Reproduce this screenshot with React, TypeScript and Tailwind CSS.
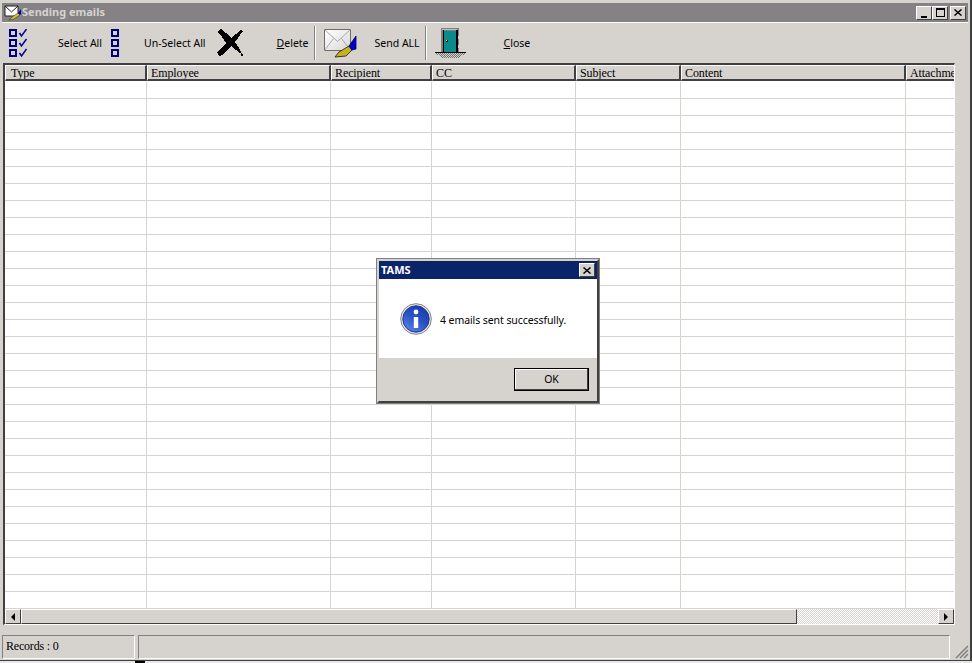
const columns = [
  { name: "Type", width: 142, pad: "pl-[5px]" },
  { name: "Employee", width: 184, pad: "pl-[3px]" },
  { name: "Recipient", width: 101, pad: "pl-[3px]" },
  { name: "CC", width: 144, pad: "pl-[3px]" },
  { name: "Subject", width: 105, pad: "pl-[3px]" },
  { name: "Content", width: 225, pad: "pl-[3px]" },
  { name: "Attachment", width: 60, pad: "pl-[3px]" },
]

const rows = Array.from({ length: 31 }, (_, i) => i)

function CheckListIcon({ checked }: { checked: boolean }) {
  return (
    <svg width="19" height="29" viewBox="0 0 19 29" shapeRendering="crispEdges">
      {[0, 10, 20].map((y) => (
        <g key={y}>
          <path d={`M0 ${y}h8v8h-8zM2 ${y + 2}v4h4v-4z`} fill="#000080" fillRule="evenodd" />
          {checked && <path d={`M10.500 ${y + 4}l2 3 5-7`} stroke="#0000a0" strokeWidth="1.500" fill="none" shapeRendering="auto" />}
        </g>
      ))}
    </svg>
  )
}

function CrossIcon() {
  return (
    <svg width="27" height="28" viewBox="0 0 27 28" shapeRendering="crispEdges">
      <path d="M0 3L4 0L9 4L14 9L24 1L26 2L18 13L22 19L25 25L23 24L14 17L6 26L2 27L0 23L9 14L5 8Z" fill="#000" />
      <rect x="24" y="25" width="2" height="2" fill="#000" />
    </svg>
  )
}

function MailIcon() {
  return (
    <svg width="34" height="29" viewBox="0 0 34 29">
      <defs>
        <linearGradient id="mailFill" x1="0" y1="0" x2="1" y2="1">
          <stop offset="0" stopColor="#ffffff" />
          <stop offset="1" stopColor="#d8d8d8" />
        </linearGradient>
      </defs>
      <path d="M0.500 0.500h26v21h-26z" fill="url(#mailFill)" stroke="#6c6c6c" />
      <path d="M0.500 0.500l13 12 13-12M0.500 21.500l9-12M26.500 21.500l-9-12" fill="none" stroke="#a8a8a8" />
      <path d="M11 28l4-5 10-6 3 4-6 6z" fill="#c8b020" stroke="#181800" strokeWidth="0.800" />
      <path d="M25 17l7-10v13l-4 1z" fill="#0000c8" stroke="#000060" strokeWidth="0.800" />
    </svg>
  )
}

function DoorIcon() {
  return (
    <svg width="32" height="31" viewBox="0 0 32 31" shapeRendering="crispEdges">
      <defs>
        <pattern id="gravel" width="2" height="2" patternUnits="userSpaceOnUse">
          <rect width="2" height="2" fill="#d6d3ce" />
          <rect width="1" height="1" fill="#707070" />
          <rect x="1" y="1" width="1" height="1" fill="#707070" />
        </pattern>
      </defs>
      <rect x="6" y="0" width="18" height="24" fill="#808080" />
      <rect x="7" y="1" width="15" height="1" fill="#c0c0c0" />
      <rect x="8" y="2" width="1" height="22" fill="#000" />
      <rect x="9" y="3" width="12" height="21" fill="#0a8a8a" />
      <rect x="21" y="2" width="2" height="22" fill="#000" />
      <rect x="23" y="8" width="1" height="3" fill="#d6d3ce" />
      <rect x="23" y="17" width="1" height="3" fill="#d6d3ce" />
      <rect x="11" y="12" width="2" height="2" fill="#000" />
      <rect x="11" y="12" width="1" height="1" fill="#ffff00" />
      <rect x="0" y="24" width="31" height="1" fill="#000" />
      <path d="M1 25h29l-1 2h-2l-2 3h-19l-2-3h-2z" fill="url(#gravel)" />
    </svg>
  )
}

function InfoIcon() {
  return (
    <svg width="32" height="32" viewBox="0 0 32 32">
      <defs>
        <linearGradient id="infoFill" x1="0.800" y1="0" x2="0.200" y2="1">
          <stop offset="0" stopColor="#1a3aa8" />
          <stop offset="0.500" stopColor="#2c52c8" />
          <stop offset="1" stopColor="#5a86ea" />
        </linearGradient>
      </defs>
      <circle cx="16" cy="16" r="15.300" fill="#e8e8ee" stroke="#80808c" />
      <circle cx="16" cy="16" r="13.200" fill="url(#infoFill)" stroke="#27357a" />
      <circle cx="16" cy="9" r="2.400" fill="#fff" />
      <path d="M13.800 14h4.400v11h-4.400z" fill="#fff" />
    </svg>
  )
}

function CloseGlyph() {
  return (
    <svg width="8" height="7" viewBox="0 0 8 7">
      <path d="M0.500 0.500l7 6M7.500 0.500l-7 6" stroke="#000" strokeWidth="1.500" />
    </svg>
  )
}

function ToolLabel({ children, className }: { children: React.ReactNode; className: string }) {
  return <span className={`mt-[2px] text-[10.500px] text-black ${className}`}>{children}</span>
}

export default function App() {
  return (
    <div className="relative flex h-[663px] w-[972px] flex-col overflow-hidden bg-[#d6d3ce] font-['Noto_Sans',sans-serif]">
      <div className="flex h-[660px] shrink-0 flex-col border-r-2 border-[#404040]">
        {/* title bar */}
        <div className="mx-[2px] mt-[3px] flex h-[19px] shrink-0 items-center bg-[#848284] pl-[2px] pr-[2px]">
          <svg width="18" height="16" viewBox="0 0 18 16">
            <path d="M1 1h13v10h-13z" fill="#fff" stroke="#222" />
            <path d="M1 1l6.500 6 6.500-6" fill="none" stroke="#222" />
            <path d="M5 15l3-3 6-4 2 2-6 4z" fill="#d8c020" stroke="#222" strokeWidth="0.500" />
            <path d="M14 8l3-4v5l-1 1z" fill="#0000c0" />
          </svg>
          <span className="text-[11px] font-bold text-[#d6d3ce]">Sending emails</span>
          <div className="ml-auto flex">
            <button className="flex h-[14px] w-[16px] items-end justify-center border border-b-[#404040] border-l-white border-r-[#404040] border-t-white bg-[#d6d3ce] pb-[1px]">
              <span className="h-[2px] w-[6px] bg-black" />
            </button>
            <button className="flex h-[14px] w-[16px] items-center justify-center border border-b-[#404040] border-l-white border-r-[#404040] border-t-white bg-[#d6d3ce]">
              <span className="h-[9px] w-[9px] border border-t-2 border-black" />
            </button>
            <button className="ml-[2px] flex h-[14px] w-[16px] items-center justify-center border border-b-[#404040] border-l-white border-r-[#404040] border-t-white bg-[#d6d3ce]">
              <CloseGlyph />
            </button>
          </div>
        </div>

        {/* toolbar */}
        <div className="mx-[2px] flex h-[41px] shrink-0 items-center border-t border-white">
          <div className="ml-[7px] flex items-center"><CheckListIcon checked /></div>
          <ToolLabel className="ml-[30px]">Select All</ToolLabel>
          <div className="ml-[9px] flex items-center"><CheckListIcon checked={false} /></div>
          <ToolLabel className="ml-[14px]">Un-Select All</ToolLabel>
          <div className="ml-[11px] flex items-center"><CrossIcon /></div>
          <ToolLabel className="ml-[33px]"><u>D</u>elete</ToolLabel>
          <div className="ml-[5px] h-[34px] w-[2px] border-l border-r border-l-[#808080] border-r-white" />
          <div className="ml-[8px] flex items-center"><MailIcon /></div>
          <ToolLabel className="ml-[17px]">Send ALL</ToolLabel>
          <div className="ml-[5px] h-[34px] w-[2px] border-l border-r border-l-[#808080] border-r-white" />
          <div className="ml-[8px] flex items-center"><DoorIcon /></div>
          <ToolLabel className="ml-[37px]"><u>C</u>lose</ToolLabel>
        </div>

        {/* grid */}
        <div className="ml-[3px] mr-[15px] flex h-[562px] shrink-0 flex-col overflow-hidden border-b border-l-2 border-r border-t-2 border-b-white border-l-[#404040] border-r-white border-t-[#404040] bg-white">
          <div className="mb-[1px] flex h-[16px] shrink-0 font-['Liberation_Serif',serif]">
            {columns.map((col) => (
              <div
                key={col.name}
                style={{ width: col.width }}
                className={`shrink-0 overflow-hidden whitespace-nowrap border-b-2 border-l border-r-2 border-t border-b-[#404040] border-l-white border-r-[#404040] border-t-white bg-[#d6d3ce] text-[12px] leading-[14px] tracking-[-0.100px] text-black ${col.pad}`}
              >
                {col.name}
              </div>
            ))}
          </div>
          <div className="min-h-0 flex-1 overflow-hidden">
            {rows.map((row) => (
              <div key={row} className="flex h-[17px]">
                {columns.map((col) => (
                  <div key={col.name} style={{ width: col.width }} className="shrink-0 border-b border-r border-[#d6d3ce]" />
                ))}
              </div>
            ))}
          </div>
          <div className="flex h-[15px] shrink-0 bg-[repeating-conic-gradient(#d6d3ce_0%_25%,#ffffff_0%_50%)] bg-[length:2px_2px]">
            <button className="flex w-[16px] items-center justify-center border border-b-[#404040] border-l-white border-r-[#404040] border-t-white bg-[#d6d3ce]">
              <span className="h-0 w-0 border-y-[4px] border-r-[4px] border-y-transparent border-r-black" />
            </button>
            <div className="w-[776px] border border-b-[#404040] border-l-white border-r-[#404040] border-t-white bg-[#d6d3ce]" />
            <button className="ml-auto flex w-[16px] items-center justify-center border border-b-[#404040] border-l-white border-r-[#404040] border-t-white bg-[#d6d3ce]">
              <span className="h-0 w-0 border-y-[4px] border-l-[4px] border-y-transparent border-l-black" />
            </button>
          </div>
        </div>

        {/* status bar */}
        <div className="mt-[10px] flex h-[24px] items-stretch gap-[3px] pl-[2px] pr-[20px]">
          <div className="flex w-[133px] items-center border border-b-white border-l-[#808080] border-r-white border-t-[#808080] pb-[3px] pl-[3px] font-['Liberation_Serif',serif] text-[12px] tracking-[-0.200px] text-black">
            Records : 0
          </div>
          <div className="flex-1 border border-b-white border-l-[#808080] border-r-white border-t-[#808080]" />
        </div>
      </div>

      {/* what shows below the window */}
      <div className="h-[1px] shrink-0 bg-[#404040]" />
      <div className="flex h-[2px] shrink-0 bg-[#e8e8e8] pl-[135px]">
        <span className="w-[10px] bg-black" />
      </div>

      {/* message box */}
      <div className="absolute left-[377px] top-[259px] flex h-[144px] w-[222px] flex-col border-2 border-b-[#404040] border-l-[#d6d3ce] border-r-[#404040] border-t-[#d6d3ce] bg-[#d6d3ce] shadow-[0_0_0_1px_#808080]">
        <div className="flex h-[18px] shrink-0 items-center bg-[#0a246a] pl-[2px] pr-[2px] text-[11px] font-bold text-white">
          TAMS
          <button className="ml-auto flex h-[14px] w-[16px] items-center justify-center border border-b-[#404040] border-l-white border-r-[#404040] border-t-white bg-[#d6d3ce]">
            <CloseGlyph />
          </button>
        </div>
        <div className="flex h-[79px] shrink-0 items-center bg-white pl-[21px]">
          <InfoIcon />
          <span className="ml-[8px] mt-[4px] text-[10.500px] tracking-[-0.080px] text-black">4 emails sent successfully.</span>
        </div>
        <div className="flex flex-1 items-center justify-end pr-[8px]">
          <button className="h-[23px] w-[75px] border border-black bg-[#d6d3ce] text-[10.500px] text-black shadow-[inset_-1px_-1px_0_#404040,inset_1px_1px_0_#fff]">
            OK
          </button>
        </div>
      </div>

      {/* size grip */}
      <svg className="absolute left-[955px] top-[645px]" width="14" height="14" viewBox="0 0 14 14">
        <path d="M13 1L1 13M13 5L5 13M13 9L9 13" stroke="#808080" strokeWidth="1.500" fill="none" />
      </svg>
    </div>
  )
}
